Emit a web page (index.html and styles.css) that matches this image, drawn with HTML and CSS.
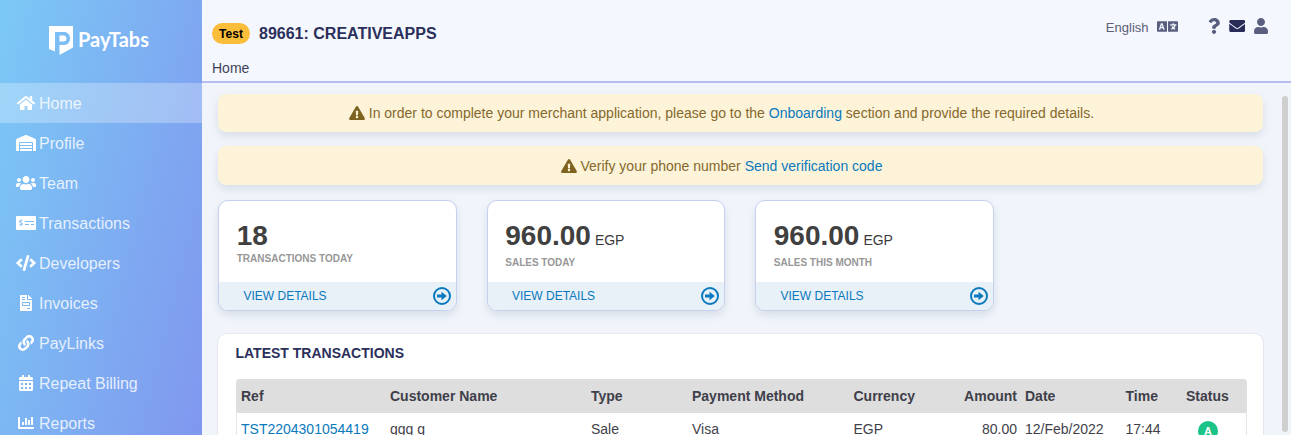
FILE: index.html
```html
<!DOCTYPE html>
<html lang="en">
<head>
<meta charset="utf-8">
<title>PayTabs</title>
<link rel="stylesheet" href="styles.css">
</head>
<body>
<div class="app">
  <aside class="sidebar">
    <div class="logo">
      <svg class="logo-mark" viewBox="0 0 24 29"><path d="M0 0H24V21.500L10.500 29V19H15C19 19 21 16 21 12.500C21 8.500 18.500 6 15 6H6V25.500L0 23ZM10.500 9.500H14.500C16.500 9.500 17.500 11 17.500 12.500C17.500 14.200 16.500 15.500 14.500 15.500H10.500Z" fill="#fff"/></svg>
      <span class="logo-text">PayTabs</span>
    </div>
    <nav class="nav">
      <a class="nav-item active"><span class="nav-icon"><svg viewBox="0 0 576 512"><path d="M280.37 148.26L96 300.11V464a16 16 0 0 0 16 16l112.06-.29a16 16 0 0 0 15.92-16V368a16 16 0 0 1 16-16h64a16 16 0 0 1 16 16v95.64a16 16 0 0 0 16 16.05L464 480a16 16 0 0 0 16-16V300L295.67 148.26a12.19 12.19 0 0 0-15.3 0zM571.6 251.47L488 182.56V44.05a12 12 0 0 0-12-12h-56a12 12 0 0 0-12 12v72.61L318.47 43a48 48 0 0 0-61 0L4.34 251.47a12 12 0 0 0-1.6 16.9l25.5 31A12 12 0 0 0 45.15 301l235.22-193.74a12.19 12.19 0 0 1 15.3 0L530.9 301a12 12 0 0 0 16.9-1.6l25.5-31a12 12 0 0 0-1.7-16.93z"/></svg></span>Home</a>
      <a class="nav-item"><span class="nav-icon"><svg viewBox="0 0 640 512"><path d="M504 352H136.4c-4.4 0-8 3.6-8 8l-.1 48c0 4.400 3.600 8 8 8H504c4.400 0 8-3.600 8-8v-48c0-4.400-3.600-8-8-8zm0 96H136.100c-4.400 0-8 3.600-8 8l-.1 48c0 4.400 3.600 8 8 8h368c4.400 0 8-3.600 8-8v-48c0-4.400-3.600-8-8-8zm0-192H136.600c-4.400 0-8 3.600-8 8l-.1 48c0 4.400 3.600 8 8 8H504c4.400 0 8-3.600 8-8v-48c0-4.400-3.600-8-8-8zm106.500-139L338.400 3.700a48.150 48.150 0 0 0-36.900 0L29.500 117C11.700 124.500 0 141.900 0 161.300V504c0 4.400 3.600 8 8 8h80c4.400 0 8-3.600 8-8V256c0-17.600 14.600-32 32.600-32h382.800c18 0 32.600 14.400 32.600 32v248c0 4.400 3.600 8 8 8h80c4.400 0 8-3.600 8-8V161.300c0-19.400-11.700-36.800-29.500-44.300z"/></svg></span>Profile</a>
      <a class="nav-item"><span class="nav-icon"><svg viewBox="0 0 640 512"><path d="M96 224c35.300 0 64-28.700 64-64s-28.700-64-64-64-64 28.700-64 64 28.700 64 64 64zm448 0c35.300 0 64-28.700 64-64s-28.700-64-64-64-64 28.700-64 64 28.700 64 64 64zm32 32h-64c-17.600 0-33.500 7.100-45.100 18.600 40.300 22.100 68.900 62 75.100 109.400h66c17.700 0 32-14.300 32-32v-32c0-35.300-28.700-64-64-64zm-256 0c61.900 0 112-50.100 112-112S381.900 32 320 32 208 82.100 208 144s50.100 112 112 112zm76.800 32h-8.300c-20.800 10-43.900 16-68.500 16s-47.600-6-68.500-16h-8.300C179.600 288 128 339.600 128 403.200V432c0 26.500 21.500 48 48 48h288c26.500 0 48-21.500 48-48v-28.800c0-63.600-51.600-115.200-115.200-115.200zm-223.700-13.400C161.500 263.100 145.600 256 128 256H64c-35.300 0-64 28.700-64 64v32c0 17.700 14.300 32 32 32h65.900c6.300-47.400 34.900-87.300 75.200-109.400z"/></svg></span>Team</a>
      <a class="nav-item"><span class="nav-icon"><svg viewBox="0 0 640 512"><path d="M608 32H32C14.330 32 0 46.330 0 64v384c0 17.670 14.330 32 32 32h576c17.670 0 32-14.330 32-32V64c0-17.670-14.330-32-32-32zM176 327.880V344c0 4.420-3.580 8-8 8h-16c-4.420 0-8-3.580-8-8v-16.290c-11.290-.58-22.270-4.520-31.370-11.350-3.900-2.930-4.100-8.770-.57-12.140l11.750-11.210c2.770-2.640 6.890-2.760 10.130-.73 3.870 2.420 8.260 3.720 12.820 3.720h28.110c6.500 0 11.800-5.920 11.800-13.190 0-5.950-3.610-11.190-8.770-12.730l-45-13.500c-18.590-5.580-31.580-23.420-31.580-43.390 0-24.520 19.050-44.440 42.670-45.070V152c0-4.420 3.580-8 8-8h16c4.420 0 8 3.580 8 8v16.290c11.290.58 22.270 4.510 31.370 11.350 3.900 2.930 4.100 8.770.57 12.140l-11.750 11.210c-2.770 2.640-6.890 2.760-10.130.73-3.870-2.430-8.260-3.720-12.820-3.720h-28.110c-6.500 0-11.800 5.920-11.800 13.190 0 5.950 3.610 11.190 8.770 12.730l45 13.500c18.590 5.580 31.580 23.420 31.580 43.390 0 24.530-19.050 44.440-42.670 45.070zM416 312c0 4.420-3.580 8-8 8H296c-4.420 0-8-3.580-8-8v-16c0-4.420 3.580-8 8-8h112c4.420 0 8 3.580 8 8v16zm160 0c0 4.420-3.580 8-8 8h-80c-4.420 0-8-3.580-8-8v-16c0-4.420 3.580-8 8-8h80c4.420 0 8 3.580 8 8v16zm0-96c0 4.420-3.580 8-8 8H296c-4.420 0-8-3.580-8-8v-16c0-4.420 3.580-8 8-8h272c4.420 0 8 3.580 8 8v16z"/></svg></span>Transactions</a>
      <a class="nav-item"><span class="nav-icon"><svg viewBox="0 0 640 512"><path d="M278.900 511.500l-61-17.700c-6.400-1.800-10-8.500-8.200-14.900L346.200 8.700c1.800-6.400 8.500-10 14.900-8.200l61 17.700c6.400 1.800 10 8.500 8.200 14.900L293.800 503.300c-1.900 6.400-8.500 10.100-14.900 8.200zm-114-112.200l43.500-46.400c4.600-4.900 4.300-12.700-.8-17.200L117 256l90.600-79.700c5.100-4.500 5.500-12.300.8-17.200l-43.500-46.400c-4.500-4.800-12.100-5.100-17-.5L3.800 247.200c-5.100 4.700-5.100 12.800 0 17.500l144.100 135.100c4.900 4.600 12.500 4.400 17-.5zm327.200.6l144.100-135.100c5.100-4.700 5.100-12.800 0-17.500L492.100 112.100c-4.800-4.500-12.400-4.300-17 .5L431.600 159c-4.600 4.900-4.300 12.700.8 17.200L523 256l-90.600 79.700c-5.100 4.500-5.500 12.300-.8 17.200l43.500 46.400c4.500 4.900 12.100 5.100 17 .6z"/></svg></span>Developers</a>
      <a class="nav-item"><span class="nav-icon"><svg viewBox="0 0 384 512"><path d="M288 256H96v64h192v-64zm89-151L279.100 7c-4.500-4.500-10.600-7-17-7H256v128h128v-6.100c0-6.300-2.500-12.400-7-16.900zm-153 31V0H24C10.700 0 0 10.700 0 24v464c0 13.300 10.700 24 24 24h336c13.300 0 24-10.700 24-24V160H248c-13.200 0-24-10.800-24-24zM64 72c0-4.420 3.580-8 8-8h80c4.420 0 8 3.580 8 8v16c0 4.420-3.580 8-8 8H72c-4.420 0-8-3.580-8-8V72zm0 64c0-4.420 3.580-8 8-8h80c4.420 0 8 3.580 8 8v16c0 4.420-3.580 8-8 8H72c-4.420 0-8-3.580-8-8v-16zm256 304c0 4.420-3.580 8-8 8h-80c-4.420 0-8-3.580-8-8v-16c0-4.420 3.580-8 8-8h80c4.420 0 8 3.580 8 8v16zm0-200v96c0 8.840-7.160 16-16 16H80c-8.840 0-16-7.160-16-16v-96c0-8.840 7.160-16 16-16h224c8.840 0 16 7.160 16 16z"/></svg></span>Invoices</a>
      <a class="nav-item"><span class="nav-icon"><svg viewBox="0 0 512 512"><path d="M326.612 185.391c59.747 59.809 58.927 155.698.36 214.590-.11.12-.24.25-.36.37l-67.200 67.200c-59.270 59.270-155.699 59.262-214.960 0-59.270-59.260-59.270-155.700 0-214.960l37.106-37.106c9.840-9.840 26.786-3.300 27.294 10.606.648 17.722 3.826 35.527 9.690 52.721 1.986 5.822.567 12.262-3.783 16.612l-13.087 13.087c-28.026 28.026-28.905 73.660-1.155 101.960 28.024 28.579 74.086 28.749 102.325.51l67.200-67.190c28.191-28.191 28.073-73.757 0-101.830-3.701-3.694-7.429-6.564-10.341-8.569a16.037 16.037 0 0 1-6.947-12.606c-.396-10.567 3.348-21.456 11.698-29.806l21.054-21.055c5.521-5.521 14.182-6.199 20.584-1.731a152.482 152.482 0 0 1 20.522 17.197zM467.547 44.449c-59.261-59.262-155.690-59.270-214.960 0l-67.200 67.200c-.12.12-.25.25-.36.37-58.566 58.892-59.387 154.781.36 214.590a152.454 152.454 0 0 0 20.521 17.196c6.402 4.468 15.064 3.789 20.584-1.731l21.054-21.055c8.350-8.350 12.094-19.239 11.698-29.806a16.037 16.037 0 0 0-6.947-12.606c-2.912-2.005-6.640-4.875-10.341-8.569-28.073-28.073-28.191-73.639 0-101.830l67.200-67.190c28.239-28.239 74.300-28.069 102.325.51 27.750 28.300 26.872 73.934-1.155 101.960l-13.087 13.087c-4.350 4.350-5.769 10.790-3.783 16.612 5.864 17.194 9.042 34.999 9.690 52.721.509 13.906 17.454 20.446 27.294 10.606l37.106-37.106c59.271-59.259 59.271-155.699.001-214.959z"/></svg></span>PayLinks</a>
      <a class="nav-item"><span class="nav-icon"><svg viewBox="0 0 448 512"><path d="M0 464c0 26.500 21.500 48 48 48h352c26.500 0 48-21.500 48-48V192H0v272zm320-196c0-6.600 5.400-12 12-12h40c6.600 0 12 5.400 12 12v40c0 6.600-5.400 12-12 12h-40c-6.600 0-12-5.400-12-12v-40zm0 128c0-6.600 5.400-12 12-12h40c6.600 0 12 5.400 12 12v40c0 6.600-5.400 12-12 12h-40c-6.600 0-12-5.400-12-12v-40zM192 268c0-6.600 5.400-12 12-12h40c6.600 0 12 5.400 12 12v40c0 6.600-5.400 12-12 12h-40c-6.600 0-12-5.400-12-12v-40zm0 128c0-6.600 5.400-12 12-12h40c6.600 0 12 5.400 12 12v40c0 6.600-5.400 12-12 12h-40c-6.600 0-12-5.400-12-12v-40zM64 268c0-6.600 5.400-12 12-12h40c6.600 0 12 5.400 12 12v40c0 6.600-5.400 12-12 12H76c-6.600 0-12-5.400-12-12v-40zm0 128c0-6.600 5.400-12 12-12h40c6.600 0 12 5.400 12 12v40c0 6.600-5.400 12-12 12H76c-6.600 0-12-5.400-12-12v-40zM400 64h-48V16c0-8.800-7.200-16-16-16h-32c-8.800 0-16 7.200-16 16v48H160V16c0-8.800-7.200-16-16-16h-32c-8.800 0-16 7.200-16 16v48H48C21.500 64 0 85.500 0 112v48h448v-48c0-26.500-21.500-48-48-48z"/></svg></span>Repeat Billing</a>
      <a class="nav-item"><span class="nav-icon"><svg viewBox="0 0 512 512"><path d="M332.800 320h38.400c6.400 0 12.800-6.400 12.800-12.800V172.800c0-6.400-6.400-12.800-12.800-12.800h-38.400c-6.400 0-12.800 6.400-12.800 12.800v134.400c0 6.400 6.400 12.800 12.800 12.800zm96 0h38.400c6.400 0 12.800-6.400 12.800-12.800V76.800c0-6.400-6.400-12.800-12.800-12.800h-38.400c-6.400 0-12.800 6.400-12.800 12.800v230.400c0 6.400 6.400 12.800 12.800 12.800zm-288 0h38.400c6.400 0 12.800-6.400 12.800-12.800v-70.400c0-6.400-6.400-12.800-12.800-12.800h-38.400c-6.400 0-12.800 6.400-12.800 12.800v70.400c0 6.400 6.400 12.800 12.800 12.800zm96 0h38.400c6.400 0 12.800-6.400 12.800-12.800V108.800c0-6.400-6.400-12.800-12.800-12.800h-38.400c-6.400 0-12.800 6.400-12.800 12.800v198.400c0 6.400 6.400 12.800 12.800 12.800zM496 384H64V80c0-8.840-7.160-16-16-16H16C7.160 64 0 71.160 0 80v336c0 17.670 14.330 32 32 32h464c8.840 0 16-7.160 16-16v-32c0-8.840-7.160-16-16-16z"/></svg></span>Reports</a>
    </nav>
  </aside>
  <div class="content">
    <header class="topbar">
      <div class="topbar-row">
        <span class="badge-test">Test</span>
        <h1 class="merchant">89661: CREATIVEAPPS</h1>
        <div class="top-actions">
          <span class="lang">English</span>
          <svg class="lang-icon" viewBox="0 0 640 512"><path d="M152.100 236.200c-3.500-12.100-7.800-33.200-7.800-33.200h-.5s-4.300 21.100-7.800 33.200l-11.100 37.500H163zM616 96H336v320h280c13.300 0 24-10.700 24-24V120c0-13.300-10.700-24-24-24zm-24 120c0 6.600-5.400 12-12 12h-11.400c-6.900 23.600-21.700 47.400-42.700 69.900 8.400 6.400 17.100 12.500 26.100 18 5.500 3.400 7.300 10.500 4.100 16.200l-7.900 13.900c-3.400 5.900-10.900 7.800-16.700 4.300-12.600-7.800-24.500-16.100-35.400-24.900-10.900 8.700-22.700 17.100-35.400 24.900-5.800 3.500-13.300 1.600-16.700-4.300l-7.900-13.900c-3.200-5.600-1.400-12.800 4.200-16.200 9.300-5.700 18-11.700 26.100-18-7.900-8.400-14.900-17-21-25.700-4-5.700-2.200-13.600 3.700-17.100l6.500-3.900 7.300-4.300c5.400-3.200 12.400-1.700 16 3.400 5 7 10.800 14 17.400 20.900 13.500-14.200 23.800-28.900 30-43.200H412c-6.600 0-12-5.400-12-12v-16c0-6.600 5.400-12 12-12h64v-16c0-6.600 5.400-12 12-12h16c6.600 0 12 5.400 12 12v16h64c6.600 0 12 5.400 12 12zM0 120v272c0 13.300 10.700 24 24 24h280V96H24c-13.300 0-24 10.700-24 24zm58.900 216.100L116.400 167c1.700-4.900 6.200-8.100 11.400-8.100h32.500c5.100 0 9.700 3.300 11.400 8.100l57.500 169.100c2.600 7.800-3.100 15.900-11.400 15.900h-22.900a12 12 0 0 1-11.500-8.600l-9.400-31.900h-60.200l-9.100 31.800c-1.500 5.100-6.200 8.700-11.500 8.700H70.300c-8.200 0-14-8.100-11.400-15.900z"/></svg>
          <svg class="top-icon question" viewBox="0 0 384 512"><path d="M202.021 0C122.202 0 70.503 32.703 29.914 91.026c-7.363 10.580-5.093 25.086 5.178 32.874l43.138 32.709c10.373 7.865 25.132 6.026 33.253-4.148 25.049-31.381 43.630-49.449 82.757-49.449 30.764 0 68.816 19.799 68.816 49.631 0 22.552-18.617 34.134-48.993 51.164-35.423 19.860-82.299 44.576-82.299 106.405V320c0 13.255 10.745 24 24 24h72.471c13.255 0 24-10.745 24-24v-5.773c0-42.860 125.268-44.645 125.268-160.627C377.504 66.256 286.902 0 202.021 0zM192 373.459c-38.196 0-69.271 31.075-69.271 69.271 0 38.195 31.075 69.270 69.271 69.270s69.271-31.075 69.271-69.271-31.075-69.270-69.271-69.270z"/></svg>
          <svg class="top-icon envelope" viewBox="0 0 512 512"><path d="M502.300 190.800c3.900-3.100 9.700-.2 9.700 4.700V400c0 26.500-21.500 48-48 48H48c-26.500 0-48-21.500-48-48V195.600c0-5 5.700-7.800 9.700-4.700 22.400 17.400 52.100 39.500 154.100 113.600 21.100 15.400 56.700 47.800 92.200 47.600 35.700.3 72-32.800 92.300-47.600 102-74.100 131.600-96.300 154-113.700zM256 320c23.200.4 56.600-29.200 73.400-41.400 132.700-96.300 142.800-104.700 173.400-128.700 5.800-4.500 9.200-11.500 9.200-18.900v-19c0-26.500-21.500-48-48-48H48C21.500 64 0 85.500 0 112v19c0 7.400 3.400 14.300 9.200 18.900 30.600 23.900 40.700 32.400 173.400 128.700 16.800 12.200 50.200 41.800 73.400 41.400z"/></svg>
          <svg class="top-icon user" viewBox="0 0 448 512"><path d="M224 256c70.700 0 128-57.300 128-128S294.700 0 224 0 96 57.300 96 128s57.300 128 128 128zm89.600 32h-16.700c-22.200 10.200-46.900 16-72.900 16s-50.600-5.800-72.900-16h-16.700C60.200 288 0 348.200 0 422.400V464c0 26.500 21.500 48 48 48h352c26.500 0 48-21.500 48-48v-41.600c0-74.200-60.200-134.400-134.400-134.400z"/></svg>
        </div>
      </div>
      <div class="crumb">Home</div>
    </header>
    <main class="main">
      <div class="scroll-thumb"></div>
      <div class="alert"><svg class="alert-icon" viewBox="0 0 576 512"><path d="M569.517 440.013C587.975 472.007 564.806 512 527.940 512H48.054c-36.937 0-59.999-40.055-41.577-71.987L246.423 24c18.467-32.009 64.720-31.951 83.154 0l239.940 416.013zM288 354c-25.405 0-46 20.595-46 46s20.595 46 46 46 46-20.595 46-46-20.595-46-46-46zm-43.673-165.346l7.418 136c.347 6.364 5.609 11.346 11.982 11.346h48.546c6.373 0 11.635-4.982 11.982-11.346l7.418-136c.375-6.874-5.098-12.654-11.982-12.654h-63.383c-6.884 0-12.356 5.780-11.981 12.654z"/></svg> In order to complete your merchant application, please go to the <a class="link">Onboarding</a> section and provide the required details.</div>
      <div class="alert"><svg class="alert-icon" viewBox="0 0 576 512"><path d="M569.517 440.013C587.975 472.007 564.806 512 527.940 512H48.054c-36.937 0-59.999-40.055-41.577-71.987L246.423 24c18.467-32.009 64.720-31.951 83.154 0l239.940 416.013zM288 354c-25.405 0-46 20.595-46 46s20.595 46 46 46 46-20.595 46-46-20.595-46-46-46zm-43.673-165.346l7.418 136c.347 6.364 5.609 11.346 11.982 11.346h48.546c6.373 0 11.635-4.982 11.982-11.346l7.418-136c.375-6.874-5.098-12.654-11.982-12.654h-63.383c-6.884 0-12.356 5.780-11.981 12.654z"/></svg> Verify your phone number <a class="link">Send verification code</a></div>
      <div class="stats">
        <section class="stat">
          <div class="stat-body">
            <div class="stat-value">18</div>
            <div class="stat-label">TRANSACTIONS TODAY</div>
          </div>
          <div class="stat-foot"><span>VIEW DETAILS</span><svg class="arrow" viewBox="0 0 18 18"><circle cx="9" cy="9" r="8" fill="none" stroke="#0a79bd" stroke-width="2"/><path d="M4 7.500h4.500V4.800L13.800 9l-5.300 4.200V10.500H4z" fill="#0a79bd"/></svg></div>
        </section>
        <section class="stat">
          <div class="stat-body">
            <div class="stat-value">960.00<span class="cur">EGP</span></div>
            <div class="stat-label">SALES TODAY</div>
          </div>
          <div class="stat-foot"><span>VIEW DETAILS</span><svg class="arrow" viewBox="0 0 18 18"><circle cx="9" cy="9" r="8" fill="none" stroke="#0a79bd" stroke-width="2"/><path d="M4 7.500h4.500V4.800L13.800 9l-5.300 4.200V10.500H4z" fill="#0a79bd"/></svg></div>
        </section>
        <section class="stat">
          <div class="stat-body">
            <div class="stat-value">960.00<span class="cur">EGP</span></div>
            <div class="stat-label">SALES THIS MONTH</div>
          </div>
          <div class="stat-foot"><span>VIEW DETAILS</span><svg class="arrow" viewBox="0 0 18 18"><circle cx="9" cy="9" r="8" fill="none" stroke="#0a79bd" stroke-width="2"/><path d="M4 7.500h4.500V4.800L13.800 9l-5.300 4.200V10.500H4z" fill="#0a79bd"/></svg></div>
        </section>
      </div>
      <section class="latest">
        <h2 class="latest-title">LATEST TRANSACTIONS</h2>
        <table class="tx">
          <colgroup><col class="c-ref"><col class="c-name"><col class="c-type"><col class="c-pay"><col class="c-cur"><col class="c-amt"><col class="c-date"><col class="c-time"><col class="c-status"></colgroup>
          <thead>
            <tr><th>Ref</th><th>Customer Name</th><th>Type</th><th>Payment Method</th><th>Currency</th><th class="num">Amount</th><th>Date</th><th>Time</th><th>Status</th></tr>
          </thead>
          <tbody>
            <tr><td><a class="link">TST2204301054419</a></td><td>ggg g</td><td>Sale</td><td>Visa</td><td>EGP</td><td class="num">80.00</td><td>12/Feb/2022</td><td>17:44</td><td class="status"><span class="status-dot">A</span></td></tr>
          </tbody>
        </table>
      </section>
    </main>
  </div>
</div>
</body>
</html>
```
FILE: styles.css
```css
* { box-sizing: border-box; }
html, body { margin: 0; height: 100%; overflow: hidden; }
body { font-family: "Liberation Sans", Arial, sans-serif; font-size: 14px; color: #3f3f4a; background: #f3f6fc; }
.app { display: flex; height: 435px; overflow: hidden; }

.sidebar { width: 202px; flex: none; background: linear-gradient(104deg, #7bc9f6, #8097ee); color: rgba(255,255,255,.82); }
.logo { height: 83px; display: flex; align-items: center; padding: 0 0 0 49px; gap: 5px; color: #fff; }
.logo-mark { width: 24px; height: 29px; flex: none; margin-top: -2px; }
.logo-text { font-family: Lato, sans-serif; font-weight: 700; font-size: 20px; margin-top: -6px; }
.nav-item { display: flex; align-items: center; height: 40px; padding: 2px 0 0 16px; font-size: 16px; }
.nav-item.active { background: rgba(255,255,255,.28); }
.nav-icon { width: 20px; margin: -2px 3px 0 0; display: flex; justify-content: center; }
.nav-icon svg { height: 16px; width: 20px; fill: #fff; }

.content { flex: 1; min-width: 0; display: flex; flex-direction: column; }
.topbar { height: 83px; flex: none; border-bottom: 2px solid #b6bdf0; padding: 23px 0 0 10px; background: #f4f7fd; }
.topbar-row { display: flex; align-items: center; height: 21px; }
.badge-test { width: 38px; height: 21px; line-height: 22px; border-radius: 11px; background: #fbbe3b; color: #000; font-size: 12px; font-weight: 700; text-align: center; }
.merchant { margin: 0 0 0 9px; font-size: 16px; font-weight: 700; color: #2b2f5b; }
.top-actions { margin-left: auto; display: flex; align-items: center; margin-right: 23px; margin-top: -15px; }
.lang { font-size: 13px; color: #5b6078; margin-top: 2px; }
.lang-icon { width: 21px; height: 17px; fill: #5a5f80; margin-left: 8px; }
.top-icon { height: 16px; }
.question { width: 12px; fill: #5a5f80; margin-left: 30px; }
.envelope { width: 16.500px; fill: #2a2c58; margin-left: 9px; }
.user { width: 14px; fill: #5a5f80; margin-left: 9px; }
.crumb { margin-top: 16px; font-size: 14px; line-height: 16px; color: #3f4358; }

.main { flex: 1; position: relative; padding: 11px 28px 0 16px; overflow: hidden; background: #f1f5fb; }
.scroll-thumb { position: absolute; top: 13px; right: 3px; width: 6px; height: 336px; border-radius: 3px; background: #cfcfcf; }

.alert { height: 38px; margin-bottom: 14px; padding-right: 38px; display: flex; align-items: center; justify-content: center; white-space: pre; background: #fdf3d9; border-radius: 8px; box-shadow: 0 4px 8px rgba(90,100,130,.16); color: #85692c; font-size: 14px; }
.alert + .alert { height: 39px; }
.alert-icon { width: 16px; height: 14px; fill: #7d6220; }
.link { color: #0a79bd; text-decoration: none; }

.stats { display: flex; gap: 29.750px; margin-top: 15px; }
.stat { width: 238.750px; height: 111px; background: #fff; border: 1px solid #c5cfee; border-radius: 10px; box-shadow: 0 4px 8px rgba(90,100,130,.16); overflow: hidden; display: flex; flex-direction: column; }
.stat-body { flex: 1; padding: 19px 18px 0 17.750px; }
.stat-value { font-size: 28px; line-height: 32px; font-weight: 700; color: #404040; }
.cur { font-size: 14px; font-weight: 400; color: #3a3a3a; margin-left: 4px; }
.stat-label { font-size: 10px; line-height: 12px; margin-top: 1px; font-weight: 700; color: #979797; }
.stat-foot { height: 28px; background: #e8f0f8; display: flex; align-items: center; justify-content: space-between; padding: 0 5px 0 24.500px; color: #0a79bd; font-size: 12px; }
.arrow { width: 18px; height: 18px; }

.latest { margin: 22px -1px 0 -1px; height: 200px; padding: 0 17px 0 18px; background: #fff; border: 1px solid #e4e8ee; border-radius: 10px; }
.latest-title { margin: 11px 0 0 -.5px; font-size: 14px; line-height: 17px; font-weight: 700; color: #2b2f5b; }
.tx { width: 1010px; margin-top: 17px; border-collapse: separate; border-spacing: 0; table-layout: fixed; font-size: 14px; }
.c-ref { width: 149px; } .c-name { width: 201px; } .c-type { width: 101px; } .c-pay { width: 161.500px; } .c-cur { width: 102px; } .c-amt { width: 69.500px; } .c-date { width: 100.500px; } .c-time { width: 60.500px; } .c-status { width: 65.500px; }
.tx th { height: 34px; padding: 0 5px; background: #dedede; text-align: left; font-weight: 700; color: #3f3f4a; }
.tx th:first-child { border-top-left-radius: 4px; }
.tx th:last-child { border-top-right-radius: 4px; }
.tx td { height: 32px; padding: 0 5px; color: #3f3f4a; white-space: nowrap; }
.tx td:first-child { border-left: 1px solid #e6e6e6; padding-left: 4px; }
.tx td:last-child { border-right: 1px solid #e6e6e6; }
.tx .num { text-align: right; padding-right: 3px; }
.tx .status { text-align: left; padding-left: 17px; }
.status-dot { display: inline-block; width: 20px; height: 20px; line-height: 20px; border-radius: 50%; background: #1cc388; color: #fff; font-size: 11px; font-weight: 700; text-align: center; vertical-align: top; margin-top: 4px; }
```
